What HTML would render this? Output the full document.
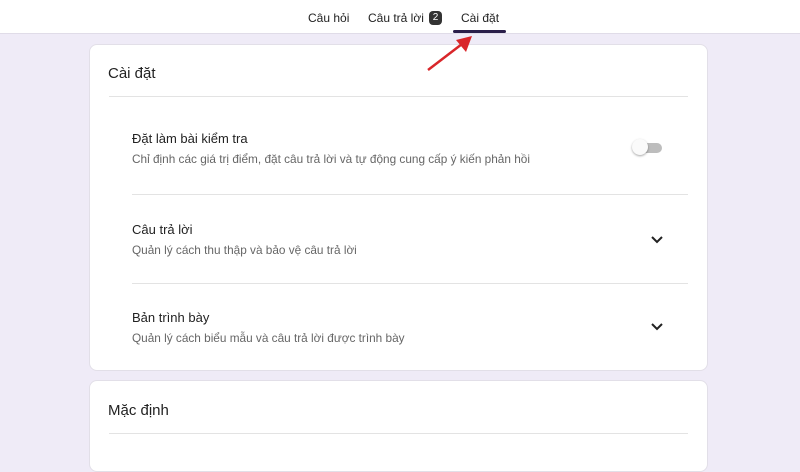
<!DOCTYPE html>
<html><head><meta charset="utf-8"><style>
body{margin:0;width:800px;height:450px;overflow:hidden;background:#efebf7;font-family:"Liberation Sans",sans-serif;position:relative}
.top{position:absolute;left:0;top:0;width:800px;height:33px;background:#fff;border-bottom:1px solid #e0dce8}
.t{position:absolute;top:11px;font-size:12px;color:#222}
.card{position:absolute;left:89px;width:617px;background:#fff;border-radius:8px;border:1px solid #e2dfe8}
.line{position:absolute;height:1px;background:#e3e3e3}
.h{position:absolute;font-size:15px;color:#222}
.r1{position:absolute;left:42px;font-size:13px;color:#222}
.r2{position:absolute;left:42px;font-size:11.8px;color:#666}
.chev{position:absolute;left:560px}
</style></head><body>
<div class="top">
<span class="t" style="left:308px">Câu hỏi</span>
<span class="t" style="left:368px">Câu trả lời</span>
<span style="position:absolute;left:429px;top:11px;width:13px;height:14px;border-radius:4px;background:#333;color:#fff;font-size:10px;text-align:center;line-height:14px">2</span>
<span class="t" style="left:461px">Cài đặt</span>
<div style="position:absolute;left:453px;top:30px;width:53px;height:3px;background:#2b1f4a;border-radius:2px"></div>
</div>
<div class="card" style="top:44px;height:325px">
<div class="h" style="left:18px;top:20px">Cài đặt</div>
<div class="line" style="left:19px;top:51px;width:579px"></div>
<div class="r1" style="top:86px">Đặt làm bài kiểm tra</div>
<div class="r2" style="top:107px">Chỉ định các giá trị điểm, đặt câu trả lời và tự động cung cấp ý kiến phản hồi</div>
<div style="position:absolute;left:546px;top:98px;width:26px;height:10px;border-radius:5px;background:#bdbdbd"></div>
<div style="position:absolute;left:542px;top:94px;width:16px;height:16px;border-radius:50%;background:#fafafa;box-shadow:0 1px 2px rgba(0,0,0,.35)"></div>
<div class="line" style="left:42px;top:149px;width:556px"></div>
<div class="r1" style="top:177px">Câu trả lời</div>
<div class="r2" style="top:198px">Quản lý cách thu thập và bảo vệ câu trả lời</div>
<svg class="chev" style="top:190px" width="14" height="10"><path d="M2 2l5 5 5-5" stroke="#222" stroke-width="2" fill="none"/></svg>
<div class="line" style="left:42px;top:238px;width:556px"></div>
<div class="r1" style="top:265px">Bản trình bày</div>
<div class="r2" style="top:286px">Quản lý cách biểu mẫu và câu trả lời được trình bày</div>
<svg class="chev" style="top:277px" width="14" height="10"><path d="M2 2l5 5 5-5" stroke="#222" stroke-width="2" fill="none"/></svg>
</div>
<div class="card" style="top:380px;height:90px">
<div class="h" style="left:18px;top:21px">Mặc định</div>
<div class="line" style="left:19px;top:52px;width:579px"></div>
</div>
<svg style="position:absolute;left:420px;top:34px" width="60" height="40"><line x1="8" y1="36" x2="42" y2="10" stroke="#d9262a" stroke-width="2.5"/><polygon points="52,2 36,6 46,18" fill="#d9262a"/></svg>
</body></html>
